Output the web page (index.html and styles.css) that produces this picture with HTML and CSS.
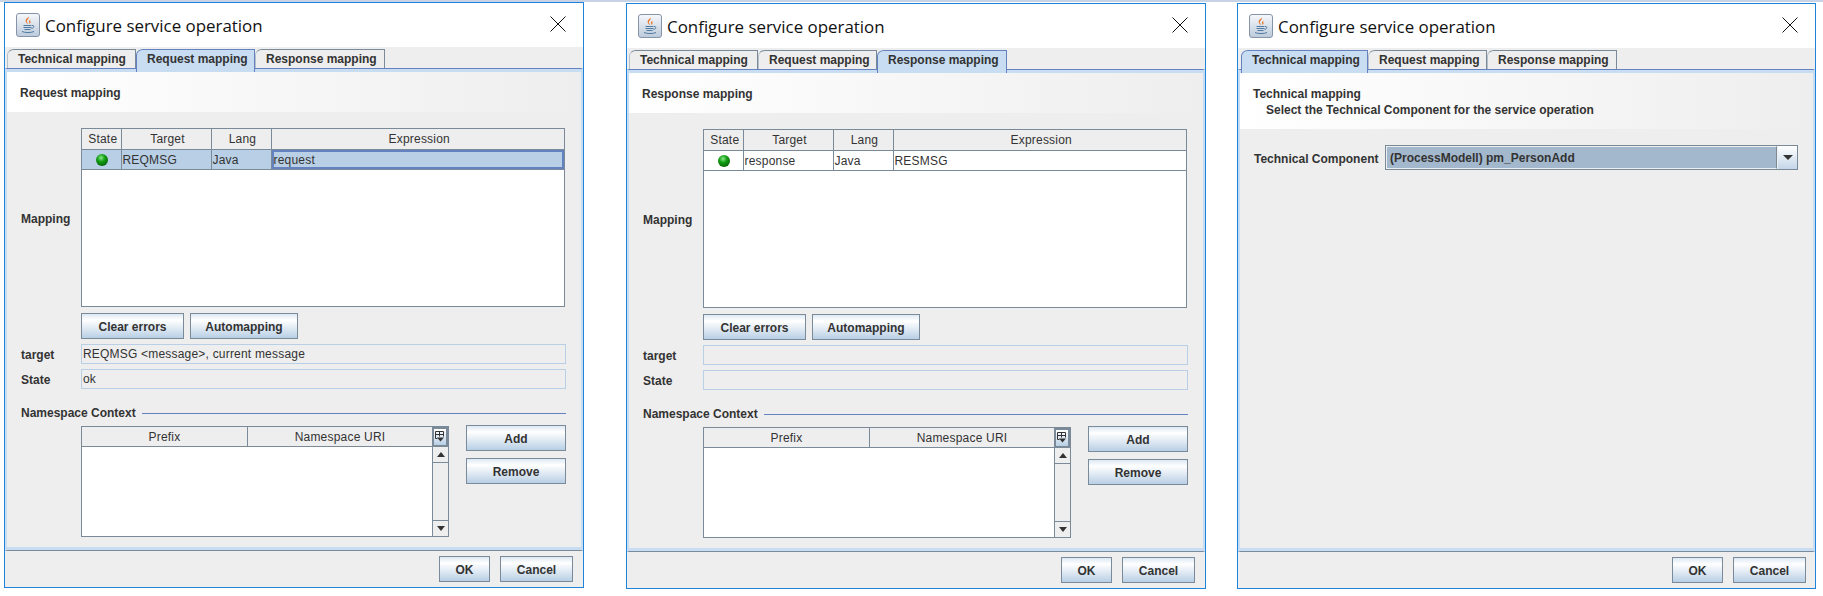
FILE: index.html
```html
<!DOCTYPE html>
<html lang="en">
<head>
    <meta charset="UTF-8">
    <title>Configure service operation</title>
    <link rel="stylesheet" href="styles.css">
</head>
<body>
<svg class="defs" width="0" height="0">
    <defs>
        <linearGradient id="icon-bg" x1="0" y1="0" x2="0" y2="1">
            <stop offset="0" stop-color="#f6f8fb"/>
            <stop offset="1" stop-color="#bccadb"/>
        </linearGradient>
        <symbol id="java-icon" viewBox="0 0 24 24">
            <rect x="0.5" y="0.5" width="23" height="23" rx="2.5" fill="url(#icon-bg)" stroke="#8594a8"/>
            <path d="M12.5 3.5c1.5 2-2.5 3.500-1.500 5.500.4.8 1 1.500 1 2-1.500-1-3-2.500-2.200-4.300.6-1.400 2.700-1.800 2.700-3.200z" fill="#e8762b"/>
            <path d="M14.500 6.500c-1 1-2 1.500-1.300 3 .2.500.3 1 0 1.500 1-.5 1.700-1.300 1.200-2.500-.3-.7-.3-1.300.1-2z" fill="#e8762b"/>
            <path d="M7.500 12.500h8M7.500 14.500h8M8.500 16.500h6M6 18.500c3 1.400 9 1.400 12 0M16 12.500c2.500-.5 2.500 2.500-.5 3" fill="none" stroke="#4f7ba3" stroke-width="1"/>
        </symbol>
        <symbol id="close-icon" viewBox="0 0 16 16">
            <path d="M.5.500l15 15M15.500.500l-15 15" stroke="#111" stroke-width="1" fill="none"/>
        </symbol>
        <symbol id="columns-icon" viewBox="0 0 10 12">
            <path d="M.5.500h8v5M.5.500v7h2M.5 3.500h8M4.500.500v5" fill="none" stroke="#333" stroke-width="1"/>
            <path d="M2 6.500h7l-3.500 4z" fill="#333"/>
        </symbol>
    </defs>
</svg>

<div class="desktop">

    <div class="window window-first">
        <div class="titlebar">
            <svg class="java-icon"><use href="#java-icon"/></svg>
            <span class="title">Configure service operation</span>
            <svg class="close-icon"><use href="#close-icon"/></svg>
        </div>
        <div class="tabs">
            <div class="tab">Technical mapping</div>
            <div class="tab active">Request mapping</div>
            <div class="tab">Response mapping</div>
        </div>
        <div class="panel">
            <div class="panel-head"><div>Request mapping</div></div>
            <div class="panel-body">
                <div class="row row-mapping">
                    <label>Mapping</label>
                    <div class="grid-box">
                        <table class="grid">
                            <thead>
                                <tr><th class="col-state">State</th><th class="col-target">Target</th><th class="col-lang">Lang</th><th>Expression</th></tr>
                            </thead>
                            <tbody>
                                <tr class="selected"><td class="center"><span class="led"></span></td><td>REQMSG</td><td>Java</td><td class="focused">request</td></tr>
                            </tbody>
                        </table>
                    </div>
                </div>
                <div class="row">
                    <span></span>
                    <div class="btn-row">
                        <button class="btn btn-clear">Clear errors</button>
                        <button class="btn btn-auto">Automapping</button>
                    </div>
                </div>
                <div class="row row-field">
                    <label>target</label>
                    <div class="field">REQMSG &lt;message&gt;, current message</div>
                </div>
                <div class="row row-field">
                    <label>State</label>
                    <div class="field">ok</div>
                </div>
                <div class="section-title"><span>Namespace Context</span></div>
                <div class="row row-ns">
                    <span></span>
                    <div class="ns-wrap">
                        <div class="ns-box">
                            <div class="ns-main">
                                <div class="ns-head"><div class="ns-prefix">Prefix</div><div class="ns-uri">Namespace URI</div></div>
                            </div>
                            <div class="ns-side">
                                <div class="corner"><svg class="columns-icon"><use href="#columns-icon"/></svg></div>
                                <div class="scroll-btn"><span class="arrow-up"></span></div>
                                <div class="scroll-track"></div>
                                <div class="scroll-btn"><span class="arrow-down"></span></div>
                            </div>
                        </div>
                        <div class="ns-buttons">
                            <button class="btn">Add</button>
                            <button class="btn">Remove</button>
                        </div>
                    </div>
                </div>
            </div>
        </div>
        <div class="footer">
            <button class="btn btn-ok">OK</button>
            <button class="btn btn-cancel">Cancel</button>
        </div>
    </div>

    <div class="window window-second">
        <div class="titlebar">
            <svg class="java-icon"><use href="#java-icon"/></svg>
            <span class="title">Configure service operation</span>
            <svg class="close-icon"><use href="#close-icon"/></svg>
        </div>
        <div class="tabs">
            <div class="tab">Technical mapping</div>
            <div class="tab">Request mapping</div>
            <div class="tab active">Response mapping</div>
        </div>
        <div class="panel">
            <div class="panel-head"><div>Response mapping</div></div>
            <div class="panel-body">
                <div class="row row-mapping">
                    <label>Mapping</label>
                    <div class="grid-box">
                        <table class="grid">
                            <thead>
                                <tr><th class="col-state">State</th><th class="col-target">Target</th><th class="col-lang">Lang</th><th>Expression</th></tr>
                            </thead>
                            <tbody>
                                <tr><td class="center"><span class="led"></span></td><td>response</td><td>Java</td><td>RESMSG</td></tr>
                            </tbody>
                        </table>
                    </div>
                </div>
                <div class="row">
                    <span></span>
                    <div class="btn-row">
                        <button class="btn btn-clear">Clear errors</button>
                        <button class="btn btn-auto">Automapping</button>
                    </div>
                </div>
                <div class="row row-field">
                    <label>target</label>
                    <div class="field"></div>
                </div>
                <div class="row row-field">
                    <label>State</label>
                    <div class="field"></div>
                </div>
                <div class="section-title"><span>Namespace Context</span></div>
                <div class="row row-ns">
                    <span></span>
                    <div class="ns-wrap">
                        <div class="ns-box">
                            <div class="ns-main">
                                <div class="ns-head"><div class="ns-prefix">Prefix</div><div class="ns-uri">Namespace URI</div></div>
                            </div>
                            <div class="ns-side">
                                <div class="corner"><svg class="columns-icon"><use href="#columns-icon"/></svg></div>
                                <div class="scroll-btn"><span class="arrow-up"></span></div>
                                <div class="scroll-track"></div>
                                <div class="scroll-btn"><span class="arrow-down"></span></div>
                            </div>
                        </div>
                        <div class="ns-buttons">
                            <button class="btn">Add</button>
                            <button class="btn">Remove</button>
                        </div>
                    </div>
                </div>
            </div>
        </div>
        <div class="footer">
            <button class="btn btn-ok">OK</button>
            <button class="btn btn-cancel">Cancel</button>
        </div>
    </div>

    <div class="window window-third">
        <div class="titlebar">
            <svg class="java-icon"><use href="#java-icon"/></svg>
            <span class="title">Configure service operation</span>
            <svg class="close-icon"><use href="#close-icon"/></svg>
        </div>
        <div class="tabs">
            <div class="tab active">Technical mapping</div>
            <div class="tab">Request mapping</div>
            <div class="tab">Response mapping</div>
        </div>
        <div class="panel">
            <div class="panel-head panel-head-tall">
                <div>Technical mapping</div>
                <div class="head-sub">Select the Technical Component for the service operation</div>
            </div>
            <div class="panel-body">
                <div class="combo-row">
                    <label>Technical Component</label>
                    <div class="combo">
                        <div class="combo-value">(ProcessModell) pm_PersonAdd</div>
                        <div class="combo-btn"><span class="arrow-combo"></span></div>
                    </div>
                </div>
            </div>
        </div>
        <div class="footer">
            <button class="btn btn-ok">OK</button>
            <button class="btn btn-cancel">Cancel</button>
        </div>
    </div>

</div>
</body>
</html>
```

FILE: styles.css
```css
html, body {
    margin: 0;
    padding: 0;
    background-color: #fff;
}

body {
    border-top: 2px solid #c8d3e5;
    font-family: "Liberation Sans", Arial, sans-serif;
    font-size: 12px;
    color: #333;
    overflow: hidden;
}

.defs {
    display: block;
    height: 0;
}

.desktop {
    display: flex;
    align-items: flex-start;
    padding-left: 4px;
}

.window {
    display: flex;
    flex-direction: column;
    box-sizing: border-box;
    width: 580px;
    height: 586px;
    border: 1px solid #1f83d9;
    background-color: #fff;
}

.window-second {
    margin: 1px 0 0 42px;
}

.window-third {
    width: 579px;
    margin: 1px 0 0 31px;
}

.titlebar {
    display: flex;
    align-items: center;
    height: 44px;
    flex: none;
    padding: 0 17px 0 11px;
}

.java-icon {
    width: 24px;
    height: 24px;
    flex: none;
}

.title {
    margin-left: 5px;
    font-family: "Open Sans", "Noto Sans", sans-serif;
    font-size: 16.900px;
    color: #111;
}

.close-icon {
    width: 16px;
    height: 16px;
    margin-left: auto;
    margin-bottom: 2px;
}

.tabs {
    display: flex;
    align-items: flex-end;
    flex: none;
    height: 21px;
    padding-left: 2px;
    background-color: #eee;
}

.window-third .tabs {
    padding-left: 3px;
}

.tab {
    box-sizing: border-box;
    height: 19px;
    line-height: 18px;
    padding: 0 10px;
    border: 1px solid #7a8a99;
    border-bottom: none;
    border-left-color: #b5c0cb;
    border-top-left-radius: 7px 6px;
    font-weight: bold;
    white-space: nowrap;
    background-color: #eee;
}

.tab:nth-child(1) { width: 129px; }
.tab:nth-child(2) { width: 119px; }
.tab:nth-child(3) { width: 130px; }

.window-third .tab:nth-child(1) { width: 127px; }

.tab.active {
    position: relative;
    height: 23px;
    margin-bottom: -4px;
    border-color: #6382bf;
    background-color: #c8ddf2;
}

.panel {
    display: flex;
    flex-direction: column;
    flex: 1;
    min-height: 0;
    border-top: 1px solid #6382bf;
    border-bottom: 1px solid #7a8a99;
    border-left: 2px solid #c8ddf2;
    border-right: 2px solid #c8ddf2;
    background-color: #eee;
    box-shadow: inset 0 3px 0 #c8ddf2, inset 0 -3px 0 #c8ddf2;
}

.panel-head {
    flex: none;
    height: 40px;
    margin-top: 3px;
    padding: 14px 0 0 13px;
    box-sizing: border-box;
    font-weight: bold;
    background: linear-gradient(to right, #fff, #eee);
}

.panel-head-tall {
    height: 56px;
}

.head-sub {
    margin: 2px 0 0 13px;
}

.panel-body {
    padding: 16px 15px 0 14px;
}

.row {
    display: grid;
    grid-template-columns: 60px 1fr;
    align-items: center;
}

label {
    padding-top: 2px;
    font-weight: bold;
}

.grid-box {
    box-sizing: border-box;
    height: 179px;
    margin-right: 1px;
    border: 1px solid #7a8a99;
    background-color: #fff;
}

.grid {
    width: 100%;
    table-layout: fixed;
    border-collapse: collapse;
}

.grid th,
.grid td {
    height: 20px;
    padding: 1px 0 0 1px;
    box-sizing: border-box;
    border-right: 1px solid #7a8a99;
    border-bottom: 1px solid #7a8a99;
    font-weight: normal;
    text-align: left;
    letter-spacing: 0.200px;
    white-space: nowrap;
}

.grid th {
    padding-left: 3px;
    text-align: center;
    background-color: #eee;
}

.grid th:last-child,
.grid td:last-child {
    border-right: none;
}

.col-state { width: 39px; }
.col-target { width: 90px; }
.col-lang { width: 60px; }

.center {
    text-align: center !important;
}

.led {
    display: inline-block;
    width: 12px;
    height: 12px;
    border-radius: 50%;
    vertical-align: middle;
    background: radial-gradient(circle at 42% 32%, #8ce88c 0, #14a014 35%, #076607 78%, #053a05 100%);
}

.selected td {
    background-color: #b8cfe5;
}

.grid .focused {
    box-shadow: inset 0 0 0 2px #6382bf;
    padding-left: 2px;
}

.btn-row {
    display: flex;
    gap: 6px;
    margin-top: 6px;
}

.btn {
    box-sizing: border-box;
    height: 26px;
    padding: 1px 0 0;
    border: 1px solid #7a8a99;
    font-family: inherit;
    font-size: 12px;
    font-weight: bold;
    color: #333;
    background: linear-gradient(to bottom, #dde8f3 0, #fff 25%, #dfe9f3 60%, #b8cfe5 100%);
}

.btn-clear { width: 103px; }
.btn-auto { width: 108px; }

.row-field {
    margin-top: 5px;
}

.field {
    box-sizing: border-box;
    height: 20px;
    line-height: 19px;
    padding-left: 1px;
    border: 1px solid #b8cfe5;
    letter-spacing: 0.200px;
    background-color: #eee;
}

.section-title {
    display: flex;
    align-items: center;
    gap: 6px;
    margin-top: 17px;
    font-weight: bold;
    line-height: 14px;
}

.section-title::after {
    content: "";
    flex: 1;
    height: 1px;
    background-color: #6382bf;
}

.row-ns {
    align-items: start;
    margin-top: 5px;
}

.ns-wrap {
    display: flex;
    justify-content: space-between;
}

.ns-box {
    display: flex;
    box-sizing: border-box;
    width: 368px;
    height: 111px;
    margin-top: 1px;
    border: 1px solid #7a8a99;
    background-color: #fff;
}

.ns-main {
    flex: 1;
}

.ns-head {
    display: grid;
    grid-template-columns: 166px 1fr;
    height: 19px;
    line-height: 20px;
    text-align: center;
    letter-spacing: 0.200px;
    background-color: #eee;
    border-bottom: 1px solid #7a8a99;
}

.ns-prefix {
    border-right: 1px solid #7a8a99;
}

.ns-side {
    display: flex;
    flex-direction: column;
    flex: none;
    width: 15px;
    border-left: 1px solid #7a8a99;
}

.corner {
    box-sizing: border-box;
    display: flex;
    align-items: center;
    justify-content: center;
    height: 20px;
    border: 2px solid #7a8a99;
    border-left-width: 1px;
    background: linear-gradient(to bottom, #fff, #b8cfe5);
}

.columns-icon {
    width: 10px;
    height: 12px;
}

.scroll-btn {
    display: flex;
    align-items: center;
    justify-content: center;
    flex: none;
    height: 15px;
    background-color: #eee;
    border-bottom: 1px solid #7a8a99;
}

.scroll-btn:last-child {
    border-top: 1px solid #7a8a99;
    border-bottom: none;
}

.scroll-track {
    flex: 1;
    background-color: #eee;
}

.arrow-up,
.arrow-down,
.arrow-combo {
    width: 0;
    height: 0;
    border-left: 4px solid transparent;
    border-right: 4px solid transparent;
}

.arrow-up {
    border-bottom: 5px solid #333;
}

.arrow-down {
    border-top: 5px solid #333;
}

.ns-buttons {
    display: flex;
    flex-direction: column;
    gap: 7px;
    width: 100px;
}

.combo-row {
    display: flex;
    align-items: center;
}

.combo-row label {
    width: 131px;
    flex: none;
}

.combo {
    display: flex;
    flex: 1;
    box-sizing: border-box;
    height: 25px;
    border: 1px solid #7a8a99;
    background-color: #eee;
}

.combo-value {
    flex: 1;
    margin-right: 1px;
    padding-left: 3px;
    line-height: 22px;
    font-weight: bold;
    background-color: #a3b8cc;
    border: 1px solid #eee;
    border-right-color: #7a8a99;
}

.combo-btn {
    display: flex;
    align-items: center;
    justify-content: center;
    width: 19px;
    background: linear-gradient(to bottom, #fff, #c4d6e8);
}

.arrow-combo {
    border-left-width: 5px;
    border-right-width: 5px;
    border-top: 5px solid #333;
}

.footer {
    display: flex;
    justify-content: flex-end;
    flex: none;
    gap: 10px;
    height: 36px;
    box-sizing: border-box;
    padding: 5px 10px 0 0;
    background-color: #eee;
}

.window-third .footer {
    padding-right: 9px;
}

.btn-ok { width: 51px; }
.btn-cancel { width: 73px; }
```
